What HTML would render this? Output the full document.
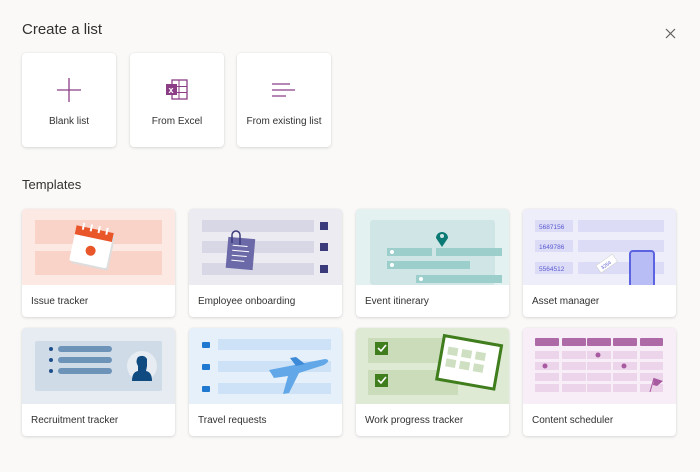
<!DOCTYPE html>
<html><head><meta charset="utf-8"><style>
*{margin:0;padding:0;box-sizing:border-box}
body{width:700px;height:472px;background:#faf9f8;font-family:"Liberation Sans",sans-serif;color:#323130;position:relative;overflow:hidden}
.abs{position:absolute}
h1{position:absolute;left:22px;top:21px;font-size:15px;font-weight:normal;color:#323130}
.tc{position:absolute;width:94px;height:94px;top:53px;background:#fff;border-radius:4px;box-shadow:0 1px 3px rgba(0,0,0,.13),0 0 1px rgba(0,0,0,.1)}
.tc span{position:absolute;left:0;right:0;top:63px;text-align:center;font-size:10px;color:#323130}
.tc svg{position:absolute;left:34px;top:24px}
.t2{position:absolute;left:22px;top:177px;font-size:13px}
.card{position:absolute;width:153px;height:108px;background:#fff;border-radius:4px;box-shadow:0 1px 3px rgba(0,0,0,.13),0 0 1px rgba(0,0,0,.1);overflow:hidden}
.card svg{position:absolute;left:0;top:0}
.card span{position:absolute;left:9px;top:87px;font-size:10px;color:#323130}
</style></head><body>
<h1>Create a list</h1>
<svg class="abs" style="left:665px;top:28px" width="11" height="11"><path d="M1 1L10 10M10 1L1 10" stroke="#605e5c" stroke-width="1.2"/></svg>

<div class="tc" style="left:22px"><svg width="26" height="26"><path d="M13 1V25M1 13H25" stroke="#8b3e86" stroke-width="1.3"/></svg><span>Blank list</span></div>
<div class="tc" style="left:130px"><svg width="26" height="26"><rect x="8" y="3" width="15" height="19" fill="none" stroke="#8b3e86" stroke-width="1.3"/><path d="M15 3V22M8 9.5H23M8 15.5H23" stroke="#8b3e86" stroke-width="1"/><rect x="2" y="7" width="11" height="11" fill="#8b3e86"/><text x="4.5" y="16" font-size="9" fill="#fff" font-family="Liberation Sans" font-weight="bold">x</text></svg><span>From Excel</span></div>
<div class="tc" style="left:237px"><svg width="26" height="26"><path d="M1 7H19M1 13H24M1 19H15" stroke="#8b3e86" stroke-width="1.2"/></svg><span>From existing list</span></div>

<div class="t2">Templates</div>

<!-- Issue tracker -->
<div class="card" style="left:22px;top:209px"><svg width="153" height="76"><rect width="153" height="76" fill="#fde9e4"/><rect x="13" y="11" width="127" height="24" fill="#f9d2c8"/><rect x="13" y="42" width="127" height="24" fill="#f9d2c8"/><g transform="rotate(12 70 40)"><rect x="52" y="22" width="38" height="36" rx="2" fill="#ddd"/><rect x="50" y="20" width="38" height="36" rx="2" fill="#fff"/><rect x="50" y="20" width="38" height="9" fill="#e8562a"/><path d="M57 16V23M65 16V23M73 16V23M81 16V23" stroke="#fff" stroke-width="2"/><circle cx="69" cy="42" r="5" fill="#e8562a"/></g></svg><span>Issue tracker</span></div>

<!-- Employee onboarding -->
<div class="card" style="left:189px;top:209px"><svg width="153" height="76"><rect width="153" height="76" fill="#ecebf2"/><rect x="13" y="11" width="112" height="12" fill="#d8d7e6"/><rect x="13" y="32" width="112" height="12" fill="#d8d7e6"/><rect x="13" y="54" width="112" height="12" fill="#d8d7e6"/><rect x="131" y="13" width="8" height="8" fill="#3b3a7a"/><rect x="131" y="34" width="8" height="8" fill="#3b3a7a"/><rect x="131" y="56" width="8" height="8" fill="#3b3a7a"/><g transform="rotate(5 52 44)"><rect x="38" y="29" width="27" height="31" fill="#6b69a8"/><path d="M43 37H58M43 42H60M43 47H58M43 52H56" stroke="#fff" stroke-width="1"/></g><path d="M43 34V26a4 4 0 0 1 8 0V36" stroke="#3b3a7a" stroke-width="1.5" fill="none"/></svg><span>Employee onboarding</span></div>

<!-- Event itinerary -->
<div class="card" style="left:356px;top:209px"><svg width="153" height="76"><rect width="153" height="76" fill="#e3f1f1"/><rect x="14" y="11" width="125" height="65" rx="3" fill="#cfe5e6"/><rect x="31" y="39" width="45" height="8" fill="#9ccfcc"/><rect x="80" y="39" width="66" height="8" fill="#9ccfcc"/><rect x="31" y="52" width="83" height="8" fill="#9ccfcc"/><rect x="60" y="66" width="86" height="8" fill="#9ccfcc"/><circle cx="36" cy="43" r="2" fill="#fff"/><circle cx="36" cy="56" r="2" fill="#fff"/><circle cx="65" cy="70" r="2" fill="#fff"/><path d="M86 38L80 29a6 6 0 1 1 12 0Z" fill="#0b7a75"/><circle cx="86" cy="27" r="2" fill="#cfe5e6"/></svg><span>Event itinerary</span></div>

<!-- Asset manager -->
<div class="card" style="left:523px;top:209px"><svg width="153" height="76"><rect width="153" height="76" fill="#eeeefb"/><rect x="12" y="11" width="38" height="12" fill="#dcdcf7"/><rect x="55" y="11" width="86" height="12" fill="#dcdcf7"/><rect x="12" y="31" width="38" height="12" fill="#dcdcf7"/><rect x="55" y="31" width="86" height="12" fill="#dcdcf7"/><rect x="12" y="53" width="38" height="12" fill="#dcdcf7"/><rect x="55" y="53" width="86" height="12" fill="#dcdcf7"/><g font-size="6.5" fill="#5a5ad0" font-family="Liberation Sans"><text x="16" y="20">5687156</text><text x="16" y="40">1649786</text><text x="16" y="62">5564512</text></g><rect x="107" y="42" width="24" height="36" rx="3" fill="#b9bdf5" stroke="#5b63e0" stroke-width="2"/><g transform="rotate(-35 84 55)"><rect x="74" y="50" width="20" height="9" fill="#fff" stroke="#ccc" stroke-width=".5"/><text x="77" y="57" font-size="5" fill="#5a5ad0">3254</text></g></svg><span>Asset manager</span></div>

<!-- Recruitment tracker -->
<div class="card" style="left:22px;top:328px"><svg width="153" height="76"><rect width="153" height="76" fill="#e6ecf2"/><rect x="13" y="13" width="127" height="50" rx="2" fill="#cfdbe7"/><rect x="36" y="18" width="54" height="6" rx="3" fill="#6d93b9"/><rect x="36" y="29" width="54" height="6" rx="3" fill="#6d93b9"/><rect x="36" y="40" width="54" height="6" rx="3" fill="#6d93b9"/><g fill="#1f4f8a"><circle cx="29" cy="21" r="2"/><circle cx="29" cy="32" r="2"/><circle cx="29" cy="43" r="2"/></g><circle cx="120" cy="38" r="15" fill="#e6ecf2"/><path d="M110 53Q110 44 116 43V38Q113 33 116 29Q122 26 125 31V38L124 43Q130 44 130 53Z" fill="#0f4a80"/></svg><span>Recruitment tracker</span></div>

<!-- Travel requests -->
<div class="card" style="left:189px;top:328px"><svg width="153" height="76"><rect width="153" height="76" fill="#e5f0fb"/><rect x="29" y="11" width="113" height="11" fill="#cde2f6"/><rect x="29" y="33" width="113" height="11" fill="#cde2f6"/><rect x="29" y="55" width="113" height="11" fill="#cde2f6"/><g fill="#1f79d0"><rect x="13" y="14" width="8" height="6" rx="1"/><rect x="13" y="36" width="8" height="6" rx="1"/><rect x="13" y="58" width="8" height="6" rx="1"/></g><path d="M80 42L136 31Q143 32 135 37L110 45L100 65L94 66L99 48L85 50Z" fill="#62a8e8"/><path d="M107 38L101 30L107 29L116 36Z" fill="#3d8bd8"/></svg><span>Travel requests</span></div>

<!-- Work progress -->
<div class="card" style="left:356px;top:328px"><svg width="153" height="76"><rect width="153" height="76" fill="#dfead5"/><rect x="12" y="10" width="90" height="25" fill="#cadcba"/><rect x="12" y="42" width="90" height="25" fill="#cadcba"/><rect x="19" y="14" width="13" height="13" fill="#3f7d1d"/><rect x="19" y="46" width="13" height="13" fill="#3f7d1d"/><path d="M22 20l3 3 5-6M22 52l3 3 5-6" stroke="#fff" stroke-width="1.6" fill="none"/><g transform="rotate(10 111 35)"><rect x="84" y="12" width="58" height="44" fill="#fff" stroke="#3f7d1d" stroke-width="3"/><g fill="#cfe0c2"><rect x="90" y="22" width="10" height="8"/><rect x="104" y="22" width="10" height="8"/><rect x="118" y="22" width="10" height="8"/><rect x="90" y="34" width="10" height="8"/><rect x="104" y="34" width="10" height="8"/><rect x="118" y="34" width="10" height="8"/></g></g></svg><span>Work progress tracker</span></div>

<!-- Content scheduler -->
<div class="card" style="left:523px;top:328px"><svg width="153" height="76"><rect width="153" height="76" fill="#f7eef7"/><g fill="#ad6aa7"><rect x="12" y="10" width="24" height="8" rx="1"/><rect x="39" y="10" width="24" height="8" rx="1"/><rect x="64" y="10" width="24" height="8" rx="1"/><rect x="90" y="10" width="24" height="8" rx="1"/><rect x="117" y="10" width="23" height="8" rx="1"/></g><g fill="#ecd4ea"><rect x="12" y="23" width="24" height="8"/><rect x="39" y="23" width="24" height="8"/><rect x="64" y="23" width="24" height="8"/><rect x="90" y="23" width="24" height="8"/><rect x="117" y="23" width="23" height="8"/><rect x="12" y="34" width="24" height="8"/><rect x="39" y="34" width="24" height="8"/><rect x="64" y="34" width="24" height="8"/><rect x="90" y="34" width="24" height="8"/><rect x="117" y="34" width="23" height="8"/><rect x="12" y="45" width="24" height="8"/><rect x="39" y="45" width="24" height="8"/><rect x="64" y="45" width="24" height="8"/><rect x="90" y="45" width="24" height="8"/><rect x="117" y="45" width="23" height="8"/><rect x="12" y="56" width="24" height="8"/><rect x="39" y="56" width="24" height="8"/><rect x="64" y="56" width="24" height="8"/><rect x="90" y="56" width="24" height="8"/><rect x="117" y="56" width="23" height="8"/></g><g fill="#a85aa1"><circle cx="75" cy="27" r="2.5"/><circle cx="22" cy="38" r="2.5"/><circle cx="101" cy="38" r="2.5"/><path d="M131 50L140 53L134 58L130 57Z"/></g><path d="M131 50L127 64" stroke="#a85aa1" stroke-width="1"/></svg><span>Content scheduler</span></div>
</body></html>
